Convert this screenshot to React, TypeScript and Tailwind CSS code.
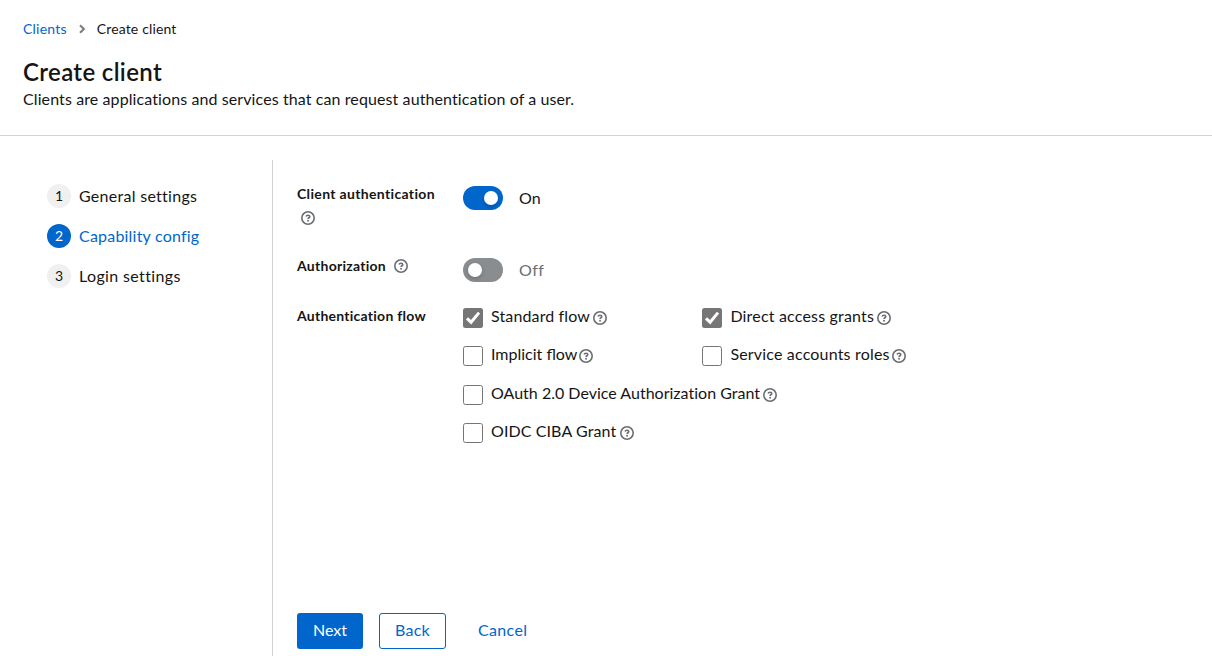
import React, { useState } from 'react';

function HelpIcon({ className = '' }: { className?: string }) {
  return (
    <svg
      viewBox="0 0 14 14"
      className={`h-[14px] w-[14px] shrink-0 text-[#6a6e73] ${className}`}
      fill="none"
      stroke="currentColor"
      aria-label="Help"
    >
      <circle cx="7" cy="7" r="6.2" strokeWidth="1.6" />
      <path d="M5.1 5.5C5.3 4.5 6.1 4.2 7 4.2c1.1 0 1.8.5 1.8 1.4 0 1.2-1.7 1.1-1.7 2.3" strokeWidth="1.6" />
      <circle cx="7.05" cy="9.75" r="0.95" fill="currentColor" stroke="none" />
    </svg>
  );
}

const steps = [
  { label: 'General settings', tracking: 'tracking-[0.28px]' },
  { label: 'Capability config', tracking: 'tracking-[0.21px]' },
  { label: 'Login settings', tracking: 'tracking-[0.36px]' },
];

function Switch({ on, onToggle }: { on: boolean; onToggle: () => void }) {
  return (
    <button type="button" role="switch" aria-checked={on} onClick={onToggle} className="flex h-6 items-center">
      <span
        className={`flex h-6 w-10 items-center rounded-full ${
          on ? 'justify-end bg-[#0066cc] pr-[5px]' : 'justify-start bg-[#8a8d90] pl-[5px]'
        }`}
      >
        <span className="h-[14px] w-[14px] rounded-full bg-white shadow-[0_2px_4px_rgba(3,3,3,0.18)]" />
      </span>
      <span
        className={`ml-4 text-base leading-6 ${
          on ? 'tracking-[0.2px] text-[#151515]' : 'tracking-[0.5px] text-[#6a6e73]'
        }`}
      >
        {on ? 'On' : 'Off'}
      </span>
    </button>
  );
}

interface FlowProps {
  label: string;
  tracking: string;
  iconGap?: string;
  initial?: boolean;
}

function Flow({ label, tracking, iconGap = 'ml-[2px]', initial = false }: FlowProps) {
  const [checked, setChecked] = useState(initial);
  return (
    <div className="flex h-6 items-start">
      <button
        type="button"
        role="checkbox"
        aria-checked={checked}
        aria-label={label}
        onClick={() => setChecked(!checked)}
        className={`mt-[3px] flex h-5 w-5 shrink-0 items-center justify-center rounded-[2.5px] ${
          checked ? 'bg-[#767676]' : 'border border-[#767676] bg-white'
        }`}
      >
        {checked && (
          <svg viewBox="0 0 20 20" className="h-5 w-5" fill="none" stroke="white" strokeWidth="3">
            <path d="M4 10.3l4.1 3.9L16 4.6" />
          </svg>
        )}
      </button>
      <span className={`ml-2 text-base leading-[22px] whitespace-nowrap ${tracking}`}>{label}</span>
      <HelpIcon className={`mt-[6px] ${iconGap}`} />
    </div>
  );
}

export default function App() {
  const [auth, setAuth] = useState(true);
  const [authorization, setAuthorization] = useState(false);

  return (
    <div className="flex h-[656px] flex-col overflow-hidden bg-white font-['Lato',sans-serif] text-[#151515]">
      <header className="h-[136px] shrink-0 border-b border-[#d2d2d2] pl-[23px]">
        <nav className="flex items-center pt-[18px] text-sm leading-[21px]">
          <a className="tracking-[0.22px] text-[#0066cc]">Clients</a>
          <svg viewBox="0 0 7 10" className="mr-[11px] ml-3 h-[10px] w-[7px] text-[#7b7e82]" fill="none" stroke="currentColor" strokeWidth="2.1">
            <path d="M1 1.2L4.9 5 1 8.8" />
          </svg>
          <span className="tracking-[0.15px]">Create client</span>
        </nav>
        <h1 className="mt-[17px] text-2xl leading-[31px] font-semibold tracking-[0.35px]">Create client</h1>
        <p className="text-base leading-6 tracking-[0.1px]">
          Clients are applications and services that can request authentication of a user.
        </p>
      </header>

      <div className="flex min-h-0 flex-1 pt-6">
        <ol className="flex w-[273px] shrink-0 flex-col gap-4 border-r border-[#d2d2d2] pt-6 pl-[47px]">
          {steps.map((step, i) => (
            <li key={step.label} className="flex h-6 items-center">
              <span
                className={`flex h-6 w-6 items-center justify-center rounded-full text-sm leading-6 ${
                  i === 1 ? 'bg-[#0066cc] text-white' : 'bg-[#f0f0f0]'
                }`}
              >
                {i + 1}
              </span>
              <span className={`ml-2 text-base leading-6 ${step.tracking} ${i === 1 ? 'text-[#0066cc]' : ''}`}>
                {step.label}
              </span>
            </li>
          ))}
        </ol>

        <main className="flex flex-1 flex-col pl-6">
          <div className="flex h-[72px] pt-[26px]">
            <div className="w-[166px] text-sm leading-4 font-bold">
              <div className="tracking-[0.34px]">Client authentication</div>
              <HelpIcon className="mt-[9px] ml-1" />
            </div>
            <Switch on={auth} onToggle={() => setAuth(!auth)} />
          </div>
          <div className="mt-[26px] flex h-6">
            <div className="flex w-[166px] items-start text-sm leading-4 font-bold">
              <span className="tracking-[0.27px]">Authorization</span>
              <HelpIcon className="mt-[1px] ml-2" />
            </div>
            <Switch on={authorization} onToggle={() => setAuthorization(!authorization)} />
          </div>
          <div className="mt-[23px] flex">
            <div className="w-[166px] pt-[2px] text-sm leading-[18px] font-bold tracking-[0.25px]">Authentication flow</div>
            <div className="flex flex-col gap-[14.4px]">
              <div className="grid grid-cols-[239.4px_auto] gap-y-[14.4px]">
                <Flow label="Standard flow" tracking="tracking-[0.13px]" iconGap="ml-[2.6px]" initial />
                <Flow label="Direct access grants" tracking="tracking-[0.18px]" iconGap="ml-[3px]" initial />
                <Flow label="Implicit flow" tracking="tracking-[0px]" />
                <Flow label="Service accounts roles" tracking="tracking-[0.18px]" iconGap="ml-[2.5px]" />
              </div>
              <Flow label="OAuth 2.0 Device Authorization Grant" tracking="tracking-[0.01px]" iconGap="ml-[3.4px]" />
              <Flow label="OIDC CIBA Grant" tracking="tracking-[0.1px]" iconGap="ml-[3.4px]" />
            </div>
          </div>
          <footer className="mt-auto mb-[7px] flex h-9 text-base leading-6">
            <button className="w-[66px] rounded-[3px] bg-[#0066cc] pb-[2px] text-white">Next</button>
            <button className="ml-4 w-[67px] rounded-[3px] border border-[#0066cc] pb-[2px] tracking-[0.27px] text-[#0066cc]">
              Back
            </button>
            <button className="ml-8 pb-[2px] tracking-[0.35px] text-[#0066cc]">Cancel</button>
          </footer>
        </main>
      </div>
    </div>
  );
}
